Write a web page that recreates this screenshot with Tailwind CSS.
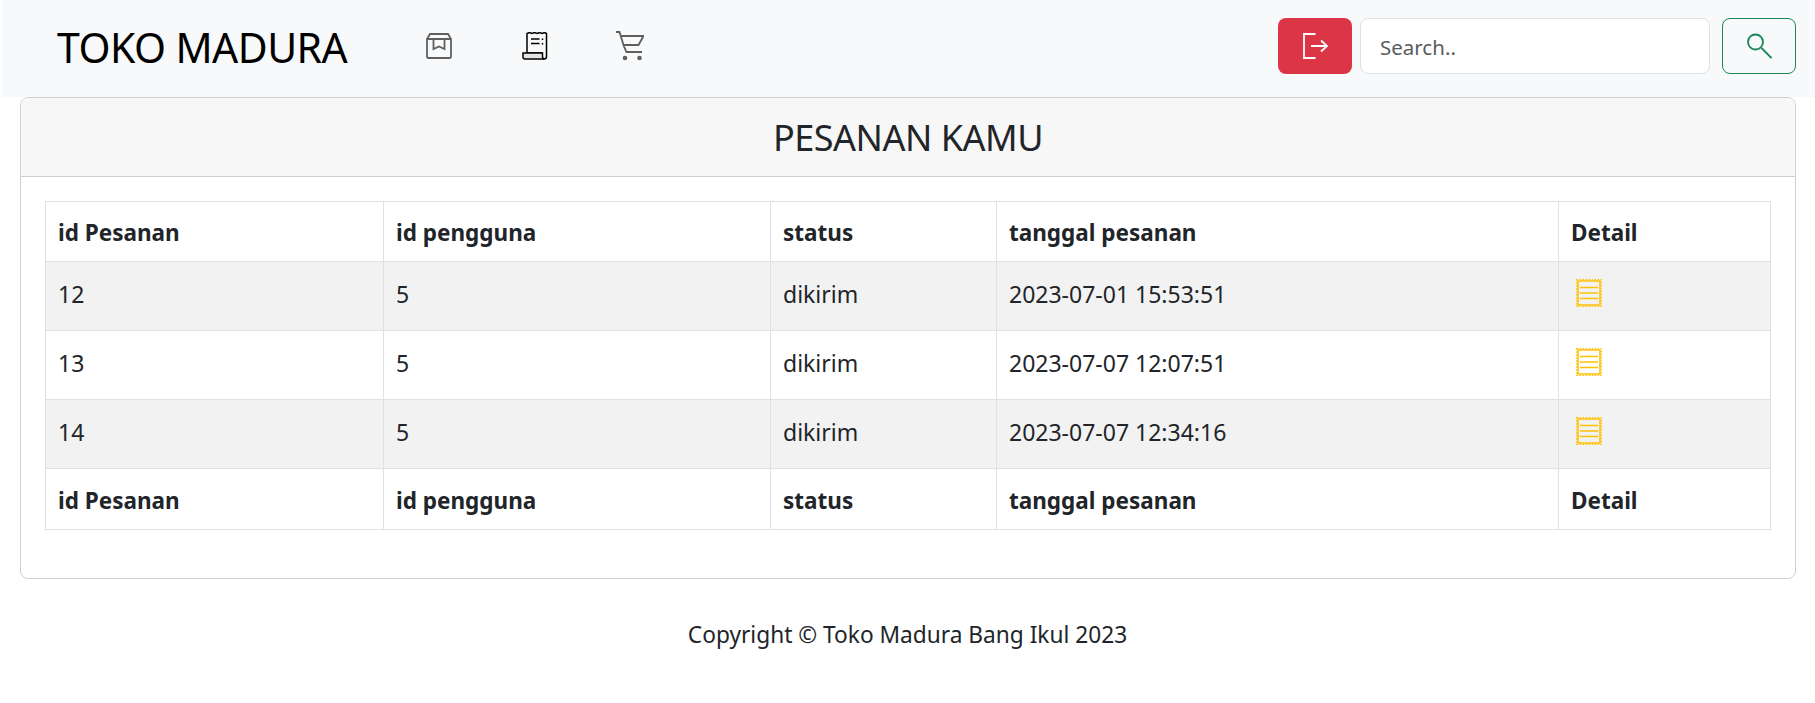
<!DOCTYPE html>
<html lang="id">
<head>
<meta charset="utf-8">
<title>Toko Madura</title>
<script src="https://cdn.jsdelivr.net/npm/@tailwindcss/browser@4"></script>
</head>
<body class="bg-white font-['Noto_Sans','Open_Sans',sans-serif] text-[23px] text-[#212529] h-[703px] overflow-hidden">
<nav class="ml-[2px] h-[97px] bg-[#f8f9fa] flex items-center pl-[55px] pr-[19px] pb-[5px]">
  <a class="text-[41px] text-black tracking-[-0.55px] leading-none w-[298px] mt-[3px]">TOKO MADURA</a>
  <div class="flex items-center">
    <svg class="ml-[71px] text-[#5f5f5f]" width="26" height="26" viewBox="0 0 26 26" fill="none" stroke="currentColor" stroke-width="1.800"><path d="M1 6 4 1h18l3 5v17.500a1.500 1.500 0 0 1-1.500 1.500h-21A1.500 1.500 0 0 1 1 23.500z"/><path d="M1 6h24M7.500 6v10l5.500-2.500 5.500 2.500V6"/></svg>
    <svg class="ml-[70px] text-black" width="26" height="28" viewBox="0 0 26 28" fill="none" stroke="currentColor" stroke-width="1.500"><path d="M5 21V1.500l2.500-1 2.500 1 2.500-1 2.500 1 2.500-1 2.500 1 2.500-1 2 1V24.500a2.500 2.500 0 0 1-5 0V21z"/><path fill="#e5e5e5" d="M1 21h19.500v3.500a2.500 2.500 0 0 0 2 2.500H3a2 2 0 0 1-2-2z"/><path d="M9 7h8.500M9 11.500h8.500M20.500 6.500v1.500M20.500 11v1.500"/></svg>
    <svg class="ml-[68px] text-[#5f5f5f]" width="28" height="30" viewBox="0 0 28 30" fill="none" stroke="currentColor" stroke-width="1.800"><path d="M0 1h3.500l4.500 14.500 2.500 5.500H26"/><path d="M4.500 5H27.500l-5 9H7.500"/><circle cx="9" cy="27" r="2.300" fill="currentColor" stroke="none"/><circle cx="23.500" cy="27" r="2.300" fill="currentColor" stroke="none"/></svg>
  </div>
  <div class="ml-auto flex items-center">
    <button class="w-[74px] h-[56px] rounded-[8px] bg-[#dc3545] flex items-center justify-center">
      <svg width="25" height="26" viewBox="0 0 25 26" fill="none" stroke="white" stroke-width="1.800"><path d="M12.500 1H1v24h11.500M8 13H24M18 7.500l6 5.500-6 5.500"/></svg>
    </button>
    <div class="ml-[8px] w-[350px] h-[56px] bg-white border border-[#dee2e6] rounded-[8px] flex items-center pl-[19px] pt-[3px] text-[20.5px] text-[#595c5f]">Search..</div>
    <button class="ml-[12px] w-[74px] h-[56px] rounded-[8px] border border-[#198754] flex items-center justify-center">
      <svg width="25" height="26" viewBox="0 0 25 26" fill="none" stroke="#198754" stroke-width="1.800"><circle cx="8.500" cy="9" r="7.500"/><path d="M14.500 15l10 10"/></svg>
    </button>
  </div>
</nav>
<main class="ml-[20px] mr-[19px] h-[482px] border border-[#d0d0d0] rounded-[8px] overflow-hidden">
  <header class="h-[79px] bg-[#f7f7f7] border-b border-[#d0d0d0] flex items-center justify-center text-[36px] tracking-[-0.5px] pt-[2px]">PESANAN KAMU</header>
  <div class="pt-[24px] px-[24px]">
    <table class="border-collapse table-fixed w-[1726px]">
      <thead>
        <tr class="h-[60px] text-[22.5px]">
          <th class="w-[338px] border border-[#dee2e6] pl-[12px] pt-[3px] text-left">id Pesanan</th>
          <th class="w-[387px] border border-[#dee2e6] pl-[12px] pt-[3px] text-left">id pengguna</th>
          <th class="w-[226px] border border-[#dee2e6] pl-[12px] pt-[3px] text-left">status</th>
          <th class="w-[562px] border border-[#dee2e6] pl-[12px] pt-[3px] text-left">tanggal pesanan</th>
          <th class="border border-[#dee2e6] pl-[12px] pt-[3px] text-left">Detail</th>
        </tr>
      </thead>
      <tbody>
        <tr class="h-[69px] bg-[#f2f2f2]">
          <td class="border border-[#dee2e6] pl-[12px] pb-[3px]">12</td>
          <td class="border border-[#dee2e6] pl-[12px] pb-[3px]">5</td>
          <td class="border border-[#dee2e6] pl-[12px] pb-[3px]">dikirim</td>
          <td class="border border-[#dee2e6] pl-[12px] pb-[3px]">2023-07-01 15:53:51</td>
          <td class="border border-[#dee2e6] pl-[17px] pb-[7px]"><svg width="26" height="28" viewBox="0 0 26 28" fill="none" stroke="#ffc107"><path stroke-width="1.600" d="M2 2h22v24H2z"/><path stroke-width="1.200" stroke-dasharray="1.500 1.500" d="M.6.6h24.800v26.800H.6z"/><path stroke-width="1.500" d="M4 8.500h18M4 14h18M4 19.500h18"/></svg></td>
        </tr>
        <tr class="h-[69px] bg-white">
          <td class="border border-[#dee2e6] pl-[12px] pb-[3px]">13</td>
          <td class="border border-[#dee2e6] pl-[12px] pb-[3px]">5</td>
          <td class="border border-[#dee2e6] pl-[12px] pb-[3px]">dikirim</td>
          <td class="border border-[#dee2e6] pl-[12px] pb-[3px]">2023-07-07 12:07:51</td>
          <td class="border border-[#dee2e6] pl-[17px] pb-[7px]"><svg width="26" height="28" viewBox="0 0 26 28" fill="none" stroke="#ffc107"><path stroke-width="1.600" d="M2 2h22v24H2z"/><path stroke-width="1.200" stroke-dasharray="1.500 1.500" d="M.6.6h24.800v26.800H.6z"/><path stroke-width="1.500" d="M4 8.500h18M4 14h18M4 19.500h18"/></svg></td>
        </tr>
        <tr class="h-[69px] bg-[#f2f2f2]">
          <td class="border border-[#dee2e6] pl-[12px] pb-[3px]">14</td>
          <td class="border border-[#dee2e6] pl-[12px] pb-[3px]">5</td>
          <td class="border border-[#dee2e6] pl-[12px] pb-[3px]">dikirim</td>
          <td class="border border-[#dee2e6] pl-[12px] pb-[3px]">2023-07-07 12:34:16</td>
          <td class="border border-[#dee2e6] pl-[17px] pb-[7px]"><svg width="26" height="28" viewBox="0 0 26 28" fill="none" stroke="#ffc107"><path stroke-width="1.600" d="M2 2h22v24H2z"/><path stroke-width="1.200" stroke-dasharray="1.500 1.500" d="M.6.6h24.800v26.800H.6z"/><path stroke-width="1.500" d="M4 8.500h18M4 14h18M4 19.500h18"/></svg></td>
        </tr>
      </tbody>
      <tfoot>
        <tr class="h-[61px] text-[22.5px]">
          <th class="border border-[#dee2e6] pl-[12px] pt-[3px] text-left">id Pesanan</th>
          <th class="border border-[#dee2e6] pl-[12px] pt-[3px] text-left">id pengguna</th>
          <th class="border border-[#dee2e6] pl-[12px] pt-[3px] text-left">status</th>
          <th class="border border-[#dee2e6] pl-[12px] pt-[3px] text-left">tanggal pesanan</th>
          <th class="border border-[#dee2e6] pl-[12px] pt-[3px] text-left">Detail</th>
        </tr>
      </tfoot>
    </table>
  </div>
</main>
<footer class="mt-[39px] text-center text-[22.7px]">Copyright © Toko Madura Bang Ikul 2023</footer>
</body>
</html>
